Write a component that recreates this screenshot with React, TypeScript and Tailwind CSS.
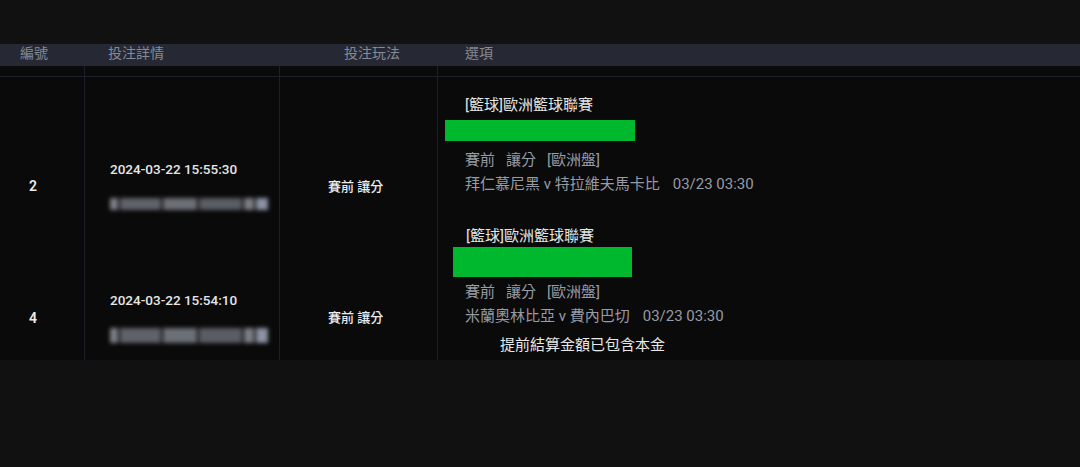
const rows = [
  {
    no: "2",
    time: "2024-03-22 15:55:30",
    play: "賽前 讓分",
    teams: "拜仁慕尼黑 v 特拉維夫馬卡比",
    kickoff: "03/23 03:30",
  },
  {
    no: "4",
    time: "2024-03-22 15:54:10",
    play: "賽前 讓分",
    teams: "米蘭奧林比亞 v 費內巴切",
    kickoff: "03/23 03:30",
  },
];

function Blur({ wide }: { wide: boolean }) {
  return (
    <div className={wide ? "flex h-[15px] w-[158px] items-center gap-[2px] blur-[2px]" : "flex h-[12px] w-[158px] items-center gap-[2px] blur-[2px]"}>
      <div className="h-full w-[8px] bg-[#7c7f86]" />
      <div className="h-full w-[42px] bg-[#5f6269]" />
      <div className="h-full w-[34px] bg-[#6c6f76]" />
      <div className="h-full w-[44px] bg-[#5a5d64]" />
      <div className="h-full w-[10px] bg-[#7a7d84]" />
      <div className="h-full w-[12px] bg-[#8c92a2]" />
    </div>
  );
}

function App() {
  return (
    <div className="h-[467px] w-[1080px] overflow-hidden bg-[#111112] font-['Roboto','Noto_Sans_CJK_TC',sans-serif]">
      <div className="h-[44px]" />
      <div className="flex h-[22px] bg-[#262834] pt-[2px] text-[14px] leading-[14px] text-[#858a96]">
        <div className="w-[85px] pl-[20px]">編號</div>
        <div className="w-[195px] pl-[23px]">投注詳情</div>
        <div className="w-[158px] pl-[64px]">投注玩法</div>
        <div className="flex-1 pl-[27px]">選項</div>
      </div>
      <div className="h-[294px] overflow-hidden bg-[#0a0a0b]">
        <div className="flex h-[11px] border-b border-[#1d1f2a]">
          <div className="w-[85px] border-r border-[#1d1f2a]" />
          <div className="w-[195px] border-r border-[#1d1f2a]" />
          <div className="w-[158px] border-r border-[#1d1f2a]" />
          <div className="flex-1" />
        </div>

        {/* row 1 */}
        <div className="flex h-[139px]">
          <div className="w-[85px] border-r border-[#1d1f2a] pl-[29px] pt-[99px] text-[14px] font-semibold leading-[20px] text-[#ececec]">
            {rows[0].no}
          </div>
          <div className="w-[195px] border-r border-[#1d1f2a] pl-[25px] pt-[82px]">
            <div className="text-[13.5px] font-medium leading-[20px] text-[#e6e6e6]">{rows[0].time}</div>
            <div className="mt-[19px]">
              <Blur wide={false} />
            </div>
          </div>
          <div className="w-[158px] border-r border-[#1d1f2a] pl-[48px] pt-[100px] text-[13px] font-medium leading-[20px] text-[#ececec]">
            {rows[0].play}
          </div>
          <div className="flex-1 pt-[18px] text-[15px] leading-[20px]">
            <div className="pl-[27px] text-[#e4e4e4]">[籃球]歐洲籃球聯賽</div>
            <div className="ml-[7px] mt-[5px] h-[21px] w-[190px] bg-[#00b82e]" />
            <div className="mt-[9px] flex gap-[11px] pl-[27px] text-[#979ba5]">
              <span>賽前</span>
              <span>讓分</span>
              <span>[歐洲盤]</span>
            </div>
            <div className="mt-[4px] flex gap-[13px] pl-[27px] text-[#979ba5]">
              <span>{rows[0].teams}</span>
              <span>{rows[0].kickoff}</span>
            </div>
          </div>
        </div>

        {/* row 2 */}
        <div className="flex h-[144px]">
          <div className="w-[85px] border-r border-[#1d1f2a] pl-[29px] pt-[92px] text-[14px] font-semibold leading-[20px] text-[#ececec]">
            {rows[1].no}
          </div>
          <div className="w-[195px] border-r border-[#1d1f2a] pl-[25px] pt-[74px]">
            <div className="text-[13.5px] font-medium leading-[20px] text-[#e6e6e6]">{rows[1].time}</div>
            <div className="mt-[18px]">
              <Blur wide={true} />
            </div>
          </div>
          <div className="w-[158px] border-r border-[#1d1f2a] pl-[48px] pt-[92px] text-[13px] font-medium leading-[20px] text-[#ececec]">
            {rows[1].play}
          </div>
          <div className="flex-1 pt-[10px] text-[15px] leading-[20px]">
            <div className="pl-[28px] text-[#e4e4e4]">[籃球]歐洲籃球聯賽</div>
            <div className="ml-[15px] mt-[1px] h-[30px] w-[179px] bg-[#00b82e]" />
            <div className="mt-[5px] flex gap-[11px] pl-[27px] text-[#979ba5]">
              <span>賽前</span>
              <span>讓分</span>
              <span>[歐洲盤]</span>
            </div>
            <div className="mt-[4px] flex gap-[13px] pl-[27px] text-[#979ba5]">
              <span>{rows[1].teams}</span>
              <span>{rows[1].kickoff}</span>
            </div>
            <div className="mt-[9px] pl-[62px] text-[#e8e8e8]">提前結算金額已包含本金</div>
          </div>
        </div>
      </div>
    </div>
  );
}

export default App;
